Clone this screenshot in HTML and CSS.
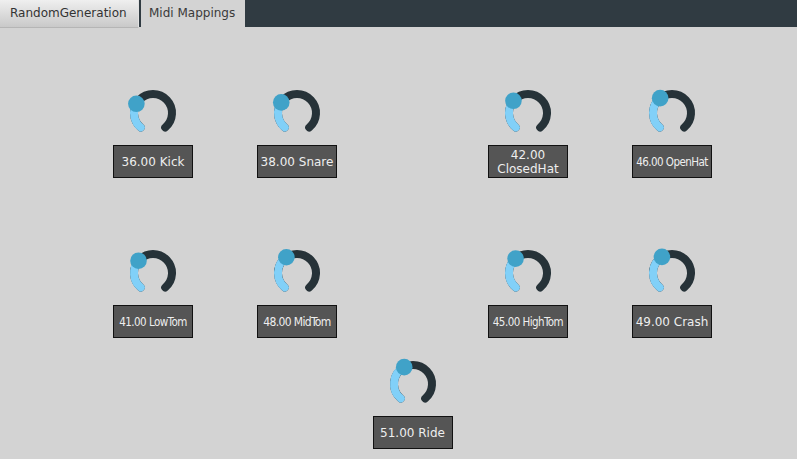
FILE: index.html
```html
<!DOCTYPE html>
<html>
<head>
<meta charset="utf-8">
<link rel="stylesheet" href="styles.css">
</head>
<body>
<div class="tabbar">
  <div class="tab">RandomGeneration</div>
  <div class="tab active">Midi Mappings</div>
</div>
<div class="board">
  <div class="pads">
    <div class="knob c1">
      <svg viewBox="0 0 60 60" width="60" height="60"><path class="track" d="M17.79 44.55 A19 19 0 1 1 42.21 44.55"/><path class="fill" d="M17.79 44.55 A19 19 0 0 1 13.38 20.79"/><circle class="dot" cx="13.38" cy="20.79" r="8.3"/></svg>
      <div class="label">36.00 Kick</div>
    </div>
    <div class="knob c2">
      <svg viewBox="0 0 60 60" width="60" height="60"><path class="track" d="M17.79 44.55 A19 19 0 1 1 42.21 44.55"/><path class="fill" d="M17.79 44.55 A19 19 0 0 1 14.25 19.38"/><circle class="dot" cx="14.25" cy="19.38" r="8.3"/></svg>
      <div class="label">38.00 Snare</div>
    </div>
    <div class="knob c4">
      <svg viewBox="0 0 60 60" width="60" height="60"><path class="track" d="M17.79 44.55 A19 19 0 1 1 42.21 44.55"/><path class="fill" d="M17.79 44.55 A19 19 0 0 1 15.45 17.79"/><circle class="dot" cx="15.45" cy="17.79" r="8.3"/></svg>
      <div class="label wrap">42.00 ClosedHat</div>
    </div>
    <div class="knob c5">
      <svg viewBox="0 0 60 60" width="60" height="60"><path class="track" d="M17.79 44.55 A19 19 0 1 1 42.21 44.55"/><path class="fill" d="M17.79 44.55 A19 19 0 0 1 18.15 15.15"/><circle class="dot" cx="18.15" cy="15.15" r="8.3"/></svg>
      <div class="label small">46.00 OpenHat</div>
    </div>
    <div class="knob c1">
      <svg viewBox="0 0 60 60" width="60" height="60"><path class="track" d="M17.79 44.55 A19 19 0 1 1 42.21 44.55"/><path class="fill" d="M17.79 44.55 A19 19 0 0 1 15.53 17.69"/><circle class="dot" cx="15.53" cy="17.69" r="8.3"/></svg>
      <div class="label small">41.00 LowTom</div>
    </div>
    <div class="knob c2">
      <svg viewBox="0 0 60 60" width="60" height="60"><path class="track" d="M17.79 44.55 A19 19 0 1 1 42.21 44.55"/><path class="fill" d="M17.79 44.55 A19 19 0 0 1 19.38 14.25"/><circle class="dot" cx="19.38" cy="14.25" r="8.3"/></svg>
      <div class="label narrow">48.00 MidTom</div>
    </div>
    <div class="knob c4">
      <svg viewBox="0 0 60 60" width="60" height="60"><path class="track" d="M17.79 44.55 A19 19 0 1 1 42.21 44.55"/><path class="fill" d="M17.79 44.55 A19 19 0 0 1 17.58 15.62"/><circle class="dot" cx="17.58" cy="15.62" r="8.3"/></svg>
      <div class="label small">45.00 HighTom</div>
    </div>
    <div class="knob c5">
      <svg viewBox="0 0 60 60" width="60" height="60"><path class="track" d="M17.79 44.55 A19 19 0 1 1 42.21 44.55"/><path class="fill" d="M17.79 44.55 A19 19 0 0 1 19.93 13.89"/><circle class="dot" cx="19.93" cy="13.89" r="8.3"/></svg>
      <div class="label">49.00 Crash</div>
    </div>
  </div>
  <div class="solo">
    <div class="knob">
      <svg viewBox="0 0 60 60" width="60" height="60"><path class="track" d="M17.79 44.55 A19 19 0 1 1 42.21 44.55"/><path class="fill" d="M17.79 44.55 A19 19 0 0 1 21.2 13.16"/><circle class="dot" cx="21.2" cy="13.16" r="8.3"/></svg>
      <div class="label">51.00 Ride</div>
    </div>
  </div>
</div>
</body>
</html>
```
FILE: styles.css
```css
html, body {
  margin: 0;
  padding: 0;
  background: #d3d3d3;
  font-family: "DejaVu Sans", Verdana, sans-serif;
  overflow: hidden;
}

.tabbar {
  display: flex;
  height: 27px;
  background: #303b42;
}

.tab {
  box-sizing: border-box;
  flex-shrink: 0;
  white-space: nowrap;
  height: 28px;
  line-height: 27px;
  font-size: 12px;
  color: #333;
  padding: 0 0 0 10px;
  width: 139px;
  margin-right: 2px;
  background: linear-gradient(#efefef, #c9c9c9);
  border-right: 1px solid #e2e2e2;
  border-bottom: 1px solid #b5b5b5;
}

.tab.active {
  width: 104px;
  padding-left: 8px;
  background: #d3d3d3;
  border: none;
  color: #3a3a3a;
}

.board {
  margin-left: 81px;
  width: 663px;
  padding-top: 56px;
}

.pads {
  display: grid;
  grid-template-columns: 144px 144px 87px 144px 144px;
  row-gap: 65px;
  justify-items: center;
}

.c1 { grid-column: 1; }
.c2 { grid-column: 2; }
.c4 { grid-column: 4; }
.c5 { grid-column: 5; }

.solo {
  display: flex;
  justify-content: center;
  margin-top: 16px;
}

.knob {
  display: flex;
  flex-direction: column;
  align-items: center;
}

.knob svg {
  display: block;
  overflow: visible;
}

.track {
  fill: none;
  stroke: #263238;
  stroke-width: 8;
  stroke-linecap: round;
}

.fill {
  fill: none;
  stroke: #81d0f8;
  stroke-width: 8;
  stroke-linecap: round;
}

.dot {
  fill: #40a2c8;
}

.label {
  box-sizing: border-box;
  width: 80px;
  height: 33px;
  margin-top: 2px;
  background: #555555;
  border: 1px solid #111;
  color: #eeeeee;
  font-size: 12px;
  line-height: 14px;
  display: flex;
  align-items: center;
  justify-content: center;
  text-align: center;
  white-space: nowrap;
}

.label.wrap {
  white-space: normal;
  padding: 0 4px;
}

.label.small {
  font-family: "DejaVu Sans Condensed", "DejaVu Sans", sans-serif;
  font-stretch: condensed;
  font-size: 11.5px;
  letter-spacing: -0.55px;
}

.label.narrow {
  font-family: "DejaVu Sans Condensed", "DejaVu Sans", sans-serif;
  font-stretch: condensed;
  font-size: 12px;
  letter-spacing: -0.65px;
}
```
